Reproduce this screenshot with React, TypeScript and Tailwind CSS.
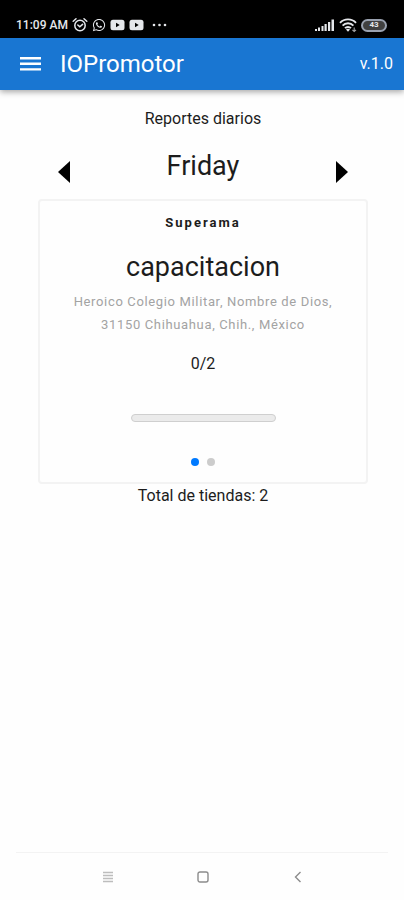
import { FaWhatsapp } from "react-icons/fa";

const stores = [
  {
    chain: "Superama",
    name: "capacitacion",
    address: "Heroico Colegio Militar, Nombre de Dios, 31150 Chihuahua, Chih., México",
    done: 0,
    total: 2,
  },
];

function AlarmIcon() {
  return (
    <svg className="size-4" viewBox="0 0 16 16" fill="none" stroke="currentColor" strokeWidth="1.5" strokeLinecap="round">
      <circle cx="8" cy="8.5" r="5.2" />
      <path d="M1.2 4.2 4 1.8M14.8 4.2 12 1.8M5.8 8l2 1.8 2.8-2.4" />
    </svg>
  );
}

function VideoIcon() {
  return (
    <svg className="h-3 w-[15px]" viewBox="0 0 15 12">
      <rect x="0.5" y="0.8" width="14" height="10.4" rx="2.5" fill="currentColor" />
      <path d="M6 3.8v4.4L9.7 6z" fill="#000" />
    </svg>
  );
}

function SignalIcon() {
  return (
    <svg className="h-3 w-5" viewBox="0 0 20 12" fill="currentColor">
      <rect x="0" y="10" width="2" height="2" />
      <rect x="3" y="8.5" width="2" height="3.5" />
      <rect x="6.5" y="7" width="2" height="5" />
      <rect x="9.5" y="5" width="2.2" height="7" />
      <rect x="13" y="3" width="2.2" height="9" />
      <rect x="16.5" y="0.5" width="2.5" height="11.5" />
    </svg>
  );
}

function WifiIcon() {
  return (
    <svg className="h-4 w-[18px]" viewBox="0 0 18 16" fill="none" stroke="currentColor" strokeWidth="1.9">
      <path d="M1 5.8a11 11 0 0 1 16 0M3.6 8.6a7.4 7.4 0 0 1 10.8 0M6 11.2a4.2 4.2 0 0 1 6 0" />
      <path d="M9 14.8 7 12.6a2.6 2.6 0 0 1 4 0z" fill="currentColor" stroke="none" />
      <path d="M15.2 10.5v4M13.4 12.8l1.8 1.7 1.8-1.7" strokeWidth="1.1" opacity="0.7" />
    </svg>
  );
}

function StatusBar() {
  return (
    <div className="flex h-[38px] items-center justify-between bg-black pt-3 pr-[17px] pl-4 text-gray-200">
      <div className="flex items-center gap-1">
        <span className="text-[12px] leading-4 font-medium">11:09 AM</span>
        <AlarmIcon />
        <FaWhatsapp className="size-[14px]" />
        <VideoIcon />
        <VideoIcon />
        <svg className="ml-1 h-1 w-4" viewBox="0 0 16 4" fill="currentColor">
          <circle cx="2" cy="2" r="1.3" />
          <circle cx="7.5" cy="2" r="1.3" />
          <circle cx="13" cy="2" r="1.3" />
        </svg>
      </div>
      <div className="flex items-center gap-1">
        <SignalIcon />
        <WifiIcon />
        <span className="flex h-[13px] w-[26px] items-center justify-center rounded-full border-2 border-gray-400 bg-neutral-700 text-[8px] leading-none font-bold">
          43
        </span>
      </div>
    </div>
  );
}

function AppBar() {
  return (
    <header className="relative flex h-[52px] items-center bg-[#1976d2] pr-[11px] pl-5 text-white shadow-[0_2px_6px_rgba(0,0,0,0.35)]">
      <button type="button" aria-label="Menu">
        <svg className="h-4 w-[21px]" viewBox="0 0 21 16" fill="currentColor">
          <path d="M0 1h21v2.4H0zM0 6.6h21V9H0zM0 12.2h21v2.4H0z" />
        </svg>
      </button>
      <h1 className="ml-[19px] text-2xl">IOPromotor</h1>
      <span className="ml-auto text-base">v.1.0</span>
    </header>
  );
}

function DayPicker({ day }: { day: string }) {
  return (
    <div className="mt-[15px] flex items-center justify-between px-[19px]">
      <button type="button" aria-label="Previous day" className="pt-3">
        <svg className="h-[22px] w-[14px]" viewBox="0 0 14 22">
          <path d="M13 0v22L1 11z" />
        </svg>
      </button>
      <h2 className="text-[27px] leading-10">{day}</h2>
      <button type="button" aria-label="Next day" className="pt-3">
        <svg className="h-[22px] w-[14px]" viewBox="0 0 14 22">
          <path d="M1 0v22l12-11z" />
        </svg>
      </button>
    </div>
  );
}

function StoreCard({ store }: { store: (typeof stores)[number] }) {
  return (
    <article className="mt-[13px] flex flex-col items-center rounded border-2 border-[#f3f3f3] px-7 pt-3 pb-4 text-center">
      <p className="text-[13px] leading-5 font-bold tracking-[2px]">{store.chain}</p>
      <h3 className="mt-4 text-[27px] leading-9">{store.name}</h3>
      <p className="mt-[5px] text-[13px] leading-[23px] tracking-wider text-[#a3a3a3]">{store.address}</p>
      <p className="mt-4 text-base leading-6">
        {store.done}/{store.total}
      </p>
      <div
        role="progressbar"
        aria-label="Progreso"
        aria-valuenow={store.done}
        aria-valuemax={store.total}
        className="mt-[38px] h-2 w-[145px] overflow-hidden rounded-full border border-[#cfcfcf] bg-[#ebebeb]"
      >
        <div className="h-full bg-[#1976d2]" style={{ width: `${(store.done / store.total) * 100}%` }} />
      </div>
      <div className="mt-9 flex gap-2">
        <button type="button" aria-label="Tienda 1" className="size-2 rounded-full bg-[#007aff]" />
        <button type="button" aria-label="Tienda 2" className="size-2 rounded-full bg-[#cccccc]" />
      </div>
    </article>
  );
}

function NavBar() {
  return (
    <nav className="mx-4 mt-auto flex h-12 items-center justify-between border-t border-[#f3f3f3] pr-[84px] pl-[86px] text-[#8c8c8c]">
      <button type="button" aria-label="Recents">
        <svg className="size-3" viewBox="0 0 12 12" fill="none" stroke="#bdbdbd" strokeWidth="1.3">
          <path d="M1 1.5h10M1 4.5h10M1 7.5h10M1 10.5h10" />
        </svg>
      </button>
      <button type="button" aria-label="Home">
        <svg className="size-3" viewBox="0 0 12 12" fill="none" stroke="currentColor" strokeWidth="1.4">
          <rect x="1" y="1" width="10" height="10" rx="2" />
        </svg>
      </button>
      <button type="button" aria-label="Back">
        <svg className="size-3" viewBox="0 0 12 12" fill="none" stroke="currentColor" strokeWidth="1.4">
          <path d="M8.5 1 3.5 6l5 5" />
        </svg>
      </button>
    </nav>
  );
}

export default function App() {
  return (
    <div className="flex min-h-screen flex-col bg-[#fefefe] font-['Roboto',sans-serif] text-[#1c1c1c]">
      <StatusBar />
      <AppBar />
      <main className="pt-[17px] pr-9 pl-[38px] text-center">
        <p className="text-base leading-6">Reportes diarios</p>
        <DayPicker day="Friday" />
        <StoreCard store={stores[0]} />
        <p className="text-base leading-6">Total de tiendas: 2</p>
      </main>
      <NavBar />
    </div>
  );
}
